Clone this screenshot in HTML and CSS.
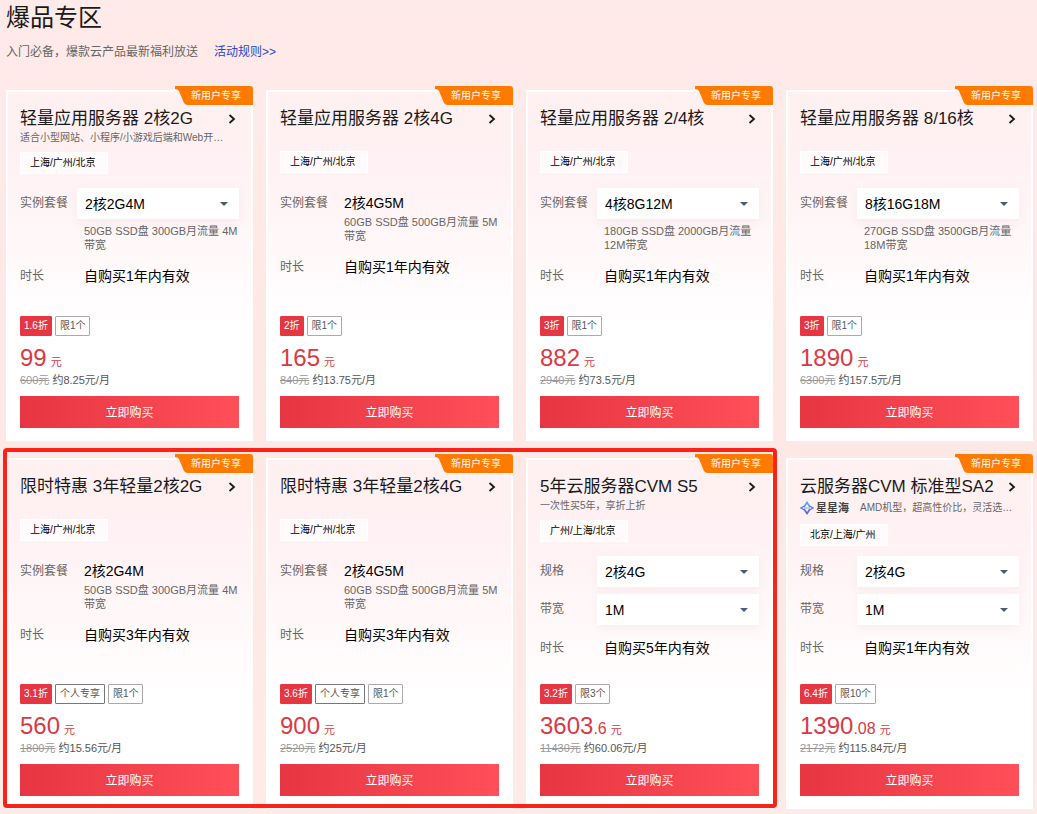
FILE: index.html
```html
<!DOCTYPE html>
<html lang="zh-CN">
<head>
  <meta charset="UTF-8">
  <meta name="viewport" content="width=device-width, initial-scale=1.0">
  <title>爆品专区</title>
  <link rel="stylesheet" href="styles.css">
</head>
<body>
  <header class="header">
    <h1>爆品专区</h1>
    <p>入门必备，爆款云产品最新福利放送<a href="#">活动规则&gt;&gt;</a></p>
  </header>
  <main class="list">
    <section class="card">
      <span class="ribbon">新用户专享</span>
      <div class="top">
        <a class="title" href="#">轻量应用服务器 2核2G<svg class="more" viewBox="0 0 8 10"><path d="M1.5 1 6 5 1.5 9"/></svg></a>
        <p class="desc">适合小型网站、小程序/小游戏后端和Web开…</p>
        <span class="region">上海/广州/北京</span>
      </div>
      <div class="row">
        <label for="s1">实例套餐</label>
        <div class="field">
          <div class="select"><select id="s1"><option>2核2G4M</option></select></div>
          <p class="tip">50GB SSD盘 300GB月流量 4M带宽</p>
        </div>
      </div>
      <div class="row time"><span class="label">时长</span><span class="value">自购买1年内有效</span></div>
      <div class="bottom">
        <div class="tags"><span class="tag off">1.6折</span><span class="tag">限1个</span></div>
        <div class="price"><b>99</b><i>元</i></div>
        <div class="old"><del>600元</del> 约8.25元/月</div>
        <button class="buy" type="button">立即购买</button>
      </div>
    </section>

    <section class="card">
      <span class="ribbon">新用户专享</span>
      <div class="top">
        <a class="title" href="#">轻量应用服务器 2核4G<svg class="more" viewBox="0 0 8 10"><path d="M1.5 1 6 5 1.5 9"/></svg></a>
        <span class="region">上海/广州/北京</span>
      </div>
      <div class="row">
        <span class="label">实例套餐</span>
        <div class="field">
          <div class="value text">2核4G5M</div>
          <p class="tip">60GB SSD盘 500GB月流量 5M带宽</p>
        </div>
      </div>
      <div class="row time"><span class="label">时长</span><span class="value">自购买1年内有效</span></div>
      <div class="bottom">
        <div class="tags"><span class="tag off">2折</span><span class="tag">限1个</span></div>
        <div class="price"><b>165</b><i>元</i></div>
        <div class="old"><del>840元</del> 约13.75元/月</div>
        <button class="buy" type="button">立即购买</button>
      </div>
    </section>

    <section class="card">
      <span class="ribbon">新用户专享</span>
      <div class="top">
        <a class="title" href="#">轻量应用服务器 2/4核<svg class="more" viewBox="0 0 8 10"><path d="M1.5 1 6 5 1.5 9"/></svg></a>
        <span class="region">上海/广州/北京</span>
      </div>
      <div class="row">
        <label for="s3">实例套餐</label>
        <div class="field">
          <div class="select"><select id="s3"><option>4核8G12M</option></select></div>
          <p class="tip">180GB SSD盘 2000GB月流量 12M带宽</p>
        </div>
      </div>
      <div class="row time"><span class="label">时长</span><span class="value">自购买1年内有效</span></div>
      <div class="bottom">
        <div class="tags"><span class="tag off">3折</span><span class="tag">限1个</span></div>
        <div class="price"><b>882</b><i>元</i></div>
        <div class="old"><del>2940元</del> 约73.5元/月</div>
        <button class="buy" type="button">立即购买</button>
      </div>
    </section>

    <section class="card">
      <span class="ribbon">新用户专享</span>
      <div class="top">
        <a class="title" href="#">轻量应用服务器 8/16核<svg class="more" viewBox="0 0 8 10"><path d="M1.5 1 6 5 1.5 9"/></svg></a>
        <span class="region">上海/广州/北京</span>
      </div>
      <div class="row">
        <label for="s4">实例套餐</label>
        <div class="field">
          <div class="select"><select id="s4"><option>8核16G18M</option></select></div>
          <p class="tip">270GB SSD盘 3500GB月流量 18M带宽</p>
        </div>
      </div>
      <div class="row time"><span class="label">时长</span><span class="value">自购买1年内有效</span></div>
      <div class="bottom">
        <div class="tags"><span class="tag off">3折</span><span class="tag">限1个</span></div>
        <div class="price"><b>1890</b><i>元</i></div>
        <div class="old"><del>6300元</del> 约157.5元/月</div>
        <button class="buy" type="button">立即购买</button>
      </div>
    </section>

    <section class="card">
      <span class="ribbon">新用户专享</span>
      <div class="top">
        <a class="title" href="#">限时特惠 3年轻量2核2G<svg class="more" viewBox="0 0 8 10"><path d="M1.5 1 6 5 1.5 9"/></svg></a>
        <span class="region">上海/广州/北京</span>
      </div>
      <div class="row">
        <span class="label">实例套餐</span>
        <div class="field">
          <div class="value text">2核2G4M</div>
          <p class="tip">50GB SSD盘 300GB月流量 4M带宽</p>
        </div>
      </div>
      <div class="row time"><span class="label">时长</span><span class="value">自购买3年内有效</span></div>
      <div class="bottom">
        <div class="tags"><span class="tag off">3.1折</span><span class="tag dark">个人专享</span><span class="tag">限1个</span></div>
        <div class="price"><b>560</b><i>元</i></div>
        <div class="old"><del>1800元</del> 约15.56元/月</div>
        <button class="buy" type="button">立即购买</button>
      </div>
    </section>

    <section class="card">
      <span class="ribbon">新用户专享</span>
      <div class="top">
        <a class="title" href="#">限时特惠 3年轻量2核4G<svg class="more" viewBox="0 0 8 10"><path d="M1.5 1 6 5 1.5 9"/></svg></a>
        <span class="region">上海/广州/北京</span>
      </div>
      <div class="row">
        <span class="label">实例套餐</span>
        <div class="field">
          <div class="value text">2核4G5M</div>
          <p class="tip">60GB SSD盘 500GB月流量 5M带宽</p>
        </div>
      </div>
      <div class="row time"><span class="label">时长</span><span class="value">自购买3年内有效</span></div>
      <div class="bottom">
        <div class="tags"><span class="tag off">3.6折</span><span class="tag dark">个人专享</span><span class="tag">限1个</span></div>
        <div class="price"><b>900</b><i>元</i></div>
        <div class="old"><del>2520元</del> 约25元/月</div>
        <button class="buy" type="button">立即购买</button>
      </div>
    </section>

    <section class="card">
      <span class="ribbon">新用户专享</span>
      <div class="top">
        <a class="title" href="#">5年云服务器CVM S5<svg class="more" viewBox="0 0 8 10"><path d="M1.5 1 6 5 1.5 9"/></svg></a>
        <p class="desc">一次性买5年，享折上折</p>
        <span class="region">广州/上海/北京</span>
      </div>
      <div class="row">
        <label for="s7">规格</label>
        <div class="field">
          <div class="select"><select id="s7"><option>2核4G</option></select></div>
        </div>
      </div>
      <div class="row">
        <label for="b7">带宽</label>
        <div class="field">
          <div class="select"><select id="b7"><option>1M</option></select></div>
        </div>
      </div>
      <div class="row time"><span class="label">时长</span><span class="value">自购买5年内有效</span></div>
      <div class="bottom">
        <div class="tags"><span class="tag off">3.2折</span><span class="tag">限3个</span></div>
        <div class="price"><b>3603</b><small>.6</small><i>元</i></div>
        <div class="old"><del>11430元</del> 约60.06元/月</div>
        <button class="buy" type="button">立即购买</button>
      </div>
    </section>

    <section class="card">
      <span class="ribbon">新用户专享</span>
      <div class="top">
        <a class="title" href="#">云服务器CVM 标准型SA2<svg class="more" viewBox="0 0 8 10"><path d="M1.5 1 6 5 1.5 9"/></svg></a>
        <div class="brand">
          <svg viewBox="0 0 14 14">
            <path d="M4 6 7 1.5 10 6" fill="none" stroke="#4fa3f7" stroke-width="1.6"/>
            <path d="M4 8 7 12.5 10 8" fill="none" stroke="#5b62e8" stroke-width="1.6"/>
            <path d="M4.5 5 1 7l3.500 2M9.500 5 13 7l-3.500 2" fill="none" stroke="#4c7df0" stroke-width="1.4"/>
            <path d="M4 7h6" stroke="#7fa8f8" stroke-width="1"/>
          </svg>
          <strong>星星海</strong>
          <p class="desc">AMD机型，超高性价比，灵活选…</p>
        </div>
        <span class="region">北京/上海/广州</span>
      </div>
      <div class="row">
        <label for="s8">规格</label>
        <div class="field">
          <div class="select"><select id="s8"><option>2核4G</option></select></div>
        </div>
      </div>
      <div class="row">
        <label for="b8">带宽</label>
        <div class="field">
          <div class="select"><select id="b8"><option>1M</option></select></div>
        </div>
      </div>
      <div class="row time"><span class="label">时长</span><span class="value">自购买1年内有效</span></div>
      <div class="bottom">
        <div class="tags"><span class="tag off">6.4折</span><span class="tag">限10个</span></div>
        <div class="price"><b>1390</b><small>.08</small><i>元</i></div>
        <div class="old"><del>2172元</del> 约115.84元/月</div>
        <button class="buy" type="button">立即购买</button>
      </div>
    </section>

    <div class="frame"></div>
  </main>
</body>
</html>
```

FILE: styles.css
```css
*{
  box-sizing: border-box;
}
body{
  margin: 0;
  padding: 0 4px 5px 6px;
  font-family: "Liberation Sans", "Noto Sans CJK SC", sans-serif;
  font-size: 12px;
  color: #000;
  background: linear-gradient(180deg, #feeae8 0%, #fde8e5 50%, #fdebe8 100%);
}
h1, p{
  margin: 0;
  font-weight: normal;
}
a{
  text-decoration: none;
}
.header{
  height: 90px;
}
.header h1{
  font-size: 24px;
  line-height: 36px;
  color: #1a1a1a;
}
.header p{
  margin-top: 7px;
  line-height: 18px;
  color: #666;
}
.header a{
  margin-left: 16px;
  color: #2b47c9;
}
.list{
  position: relative;
  display: grid;
  grid-template-columns: repeat(4, 1fr);
  gap: 17px 13px;
}
.card{
  position: relative;
  display: flex;
  flex-direction: column;
  min-width: 0;
  min-height: 351px;
  padding: 12px 12px 11px;
  border: 2px solid #fff;
  background: linear-gradient(180deg, #fff0f1 0%, #fff2f4 25%, #fff 68%);
}
/* 角标 */
.ribbon{
  position: absolute;
  top: -6px;
  right: -2px;
  width: 78px;
  height: 19px;
  padding-left: 16px;
  font-size: 10px;
  line-height: 19px;
  color: #fff;
  background: #ff7a00;
  clip-path: path("M0 0H75Q78 0 78 3V19H13Q10 19 9 17L4 5Q3 3 0 3Z");
}
.top{
  min-height: 84px;
}
.title{
  display: flex;
  align-items: center;
  justify-content: space-between;
  padding: 2px 3px 0 0;
  font-size: 17px;
  line-height: 26px;
  white-space: nowrap;
  color: #1a1a1a;
}
.more{
  width: 8px;
  height: 10px;
  fill: none;
  stroke: #1a1a1a;
  stroke-width: 1.8;
}
.desc{
  font-size: 10px;
  line-height: 12px;
  white-space: nowrap;
  color: #666;
}
.brand{
  display: flex;
  align-items: center;
  height: 16px;
}
.brand svg{
  width: 14px;
  height: 14px;
}
.brand strong{
  margin: 0 11px 0 2px;
  font-size: 11px;
  line-height: 16px;
  color: #444;
}
.region{
  display: block;
  width: fit-content;
  min-width: 88px;
  margin-top: 8px;
  padding: 0 9px;
  border: 1px solid #fff;
  font-size: 10px;
  line-height: 20px;
  background: #fffbfc;
}
.title + .region{
  margin-top: 19px;
}
.row{
  display: flex;
  margin-bottom: 7px;
}
.row label, .label{
  flex: none;
  width: 57px;
  line-height: 31px;
  color: #666;
}
.field{
  flex: 1;
  min-width: 0;
}
.select{
  position: relative;
  box-shadow: 0 4px 10px rgba(160, 60, 80, .06);
}
.select::after{
  content: "";
  position: absolute;
  top: 14px;
  right: 11px;
  border: 4px solid transparent;
  border-top-color: #4b5b76;
  border-bottom: 0;
  pointer-events: none;
}
.select select{
  display: block;
  width: 100%;
  height: 31px;
  padding: 0 8px;
  border: 0;
  border-radius: 0;
  font-family: inherit;
  font-size: 14px;
  color: #000;
  background: #fff;
  appearance: none;
}
.value{
  padding-left: 7px;
  font-size: 14px;
  line-height: 20px;
}
.text{
  padding-top: 5px;
}
.tip{
  margin: 5px 0 1px;
  padding-left: 7px;
  font-size: 11px;
  line-height: 14px;
  color: #666;
}
.text + .tip{
  margin-top: 2px;
}
.time{
  padding-top: 6px;
}
.time .label{
  line-height: 20px;
}
.bottom{
  margin-top: auto;
}
.tags{
  display: flex;
  gap: 3px;
}
.tag{
  padding: 0 4px;
  border: 1px solid #aaa;
  border-radius: 1px;
  font-size: 10px;
  line-height: 18px;
  color: #555;
}
.off{
  padding: 0 3px;
  border-color: #e63641;
  color: #fff;
  background: #e63641;
}
.dark{
  border-color: #777;
}
.price{
  display: flex;
  align-items: baseline;
  height: 28px;
  margin-top: 8px;
  line-height: 28px;
  color: #d93a45;
}
.price b{
  font-size: 24px;
  font-weight: normal;
}
.price small{
  font-size: 16px;
}
.price i{
  margin-left: 4px;
  font-size: 11px;
  font-style: normal;
}
.old{
  height: 14px;
  margin: 1px 0 9px;
  font-size: 11px;
  line-height: 14px;
  color: #555;
}
.old del{
  color: #999;
}
.buy{
  display: block;
  width: 100%;
  height: 32px;
  padding: 0 0 1px;
  border: 0;
  font-family: inherit;
  font-size: 12px;
  color: #fff;
  background: linear-gradient(90deg, #e63641, #ff4f59);
}
/* 红框: 第二行前三个 */
.frame{
  position: absolute;
  grid-area: 2 / 1 / 3 / 4;
  inset: -10px -4px 1px -3px;
  border: 4px solid #fb2318;
  border-radius: 4px;
  pointer-events: none;
}
```
